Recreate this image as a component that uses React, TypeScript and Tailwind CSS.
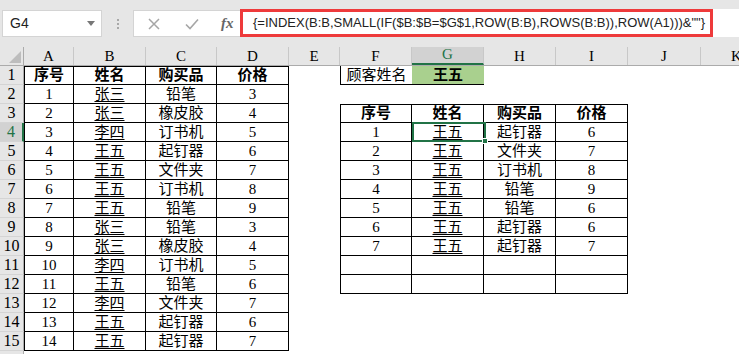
import React from 'react';

const COLS = [
    { k: 'A', w: 'w-[50px]' },
    { k: 'B', w: 'w-[72px]' },
    { k: 'C', w: 'w-[71px]' },
    { k: 'D', w: 'w-[72px]' },
    { k: 'E', w: 'w-[51px]' },
    { k: 'F', w: 'w-[72px]' },
    { k: 'G', w: 'w-[72px]' },
    { k: 'H', w: 'w-[72px]' },
    { k: 'I', w: 'w-[72px]' },
    { k: 'J', w: 'w-[73px]' },
    { k: 'K', w: 'w-[72px]' },
];

const HEAD = ['序号', '姓名', '购买品', '价格'];

const LEFT: (string | number)[][] = [
    [1, '张三', '铅笔', 3],
    [2, '张三', '橡皮胶', 4],
    [3, '李四', '订书机', 5],
    [4, '王五', '起钉器', 6],
    [5, '王五', '文件夹', 7],
    [6, '王五', '订书机', 8],
    [7, '王五', '铅笔', 9],
    [8, '张三', '铅笔', 3],
    [9, '张三', '橡皮胶', 4],
    [10, '李四', '订书机', 5],
    [11, '王五', '铅笔', 6],
    [12, '李四', '文件夹', 7],
    [13, '王五', '起钉器', 6],
    [14, '王五', '起钉器', 7],
];

const RIGHT: (string | number)[][] = [
    [1, '王五', '起钉器', 6],
    [2, '王五', '文件夹', 7],
    [3, '王五', '订书机', 8],
    [4, '王五', '铅笔', 9],
    [5, '王五', '铅笔', 6],
    [6, '王五', '起钉器', 6],
    [7, '王五', '起钉器', 7],
    ['', '', '', ''],
    ['', '', '', ''],
];

interface CellInfo {
    text: string;
    bold?: boolean;
    underline?: boolean;
    green?: boolean;
    bt?: boolean;
    bl?: boolean;
    bb?: boolean;
    br?: boolean;
}

const FORMULA = '{=INDEX(B:B,SMALL(IF($B:$B=$G$1,ROW(B:B),ROWS(B:B)),ROW(A1)))&""}';

function getCell(r: number, c: number): CellInfo {
    // left table A1:D15
    if (c <= 3 && r <= 15) {
        const text = r === 1 ? HEAD[c] : String(LEFT[r - 2][c]);
        return { text, bold: r === 1, underline: r > 1 && c === 1, bt: r === 1, bl: c === 0, bb: true, br: true };
    }
    // lookup cells F1:G1
    if (r === 1 && c === 5) return { text: '顾客姓名', bl: true, bb: true };
    if (r === 1 && c === 6) return { text: '王五', bold: true, green: true, bb: true };
    // right table F3:I12
    if (c >= 5 && c <= 8 && r >= 3 && r <= 12) {
        const i = c - 5;
        const text = r === 3 ? HEAD[i] : String(RIGHT[r - 4][i]);
        return { text, bold: r === 3, underline: r > 3 && i === 1, bt: r === 3, bl: i === 0, bb: true, br: true };
    }
    return { text: '' };
}

const Cell: React.FC<{ info: CellInfo; w: string }> = ({ info, w }) => (
    <div
        className={[
            w,
            'h-[19px] shrink-0 box-border flex items-end justify-center overflow-hidden leading-[18px] text-[15px] text-black border-black',
            info.bt ? 'border-t' : '',
            info.bl ? 'border-l' : '',
            info.bb ? 'border-b' : '',
            info.br ? 'border-r' : '',
            info.bold ? 'font-bold' : '',
            info.green ? 'bg-[#a9d08e]' : '',
        ].join(' ')}
    >
        <span className={info.underline ? 'underline underline-offset-[2px] decoration-1' : ''}>{info.text}</span>
    </div>
);

const App: React.FC = () => {
    const rows = Array.from({ length: 16 }, (_, i) => i + 1);

    return (
        <div className="w-[739px] h-[354px] overflow-hidden bg-white" style={{ fontFamily: '"Liberation Serif", "Noto Sans CJK SC", serif' }}>
            {/* Formula bar */}
            <div className="h-[47px] bg-[#e6e6e6] flex items-start pt-[10px] pl-[2px]" style={{ fontFamily: '"Liberation Sans", "Noto Sans CJK SC", sans-serif' }}>
                <div className="w-[100px] h-[27px] bg-white border border-[#d4d4d4] flex items-center justify-between pl-[7px] pr-[6px] text-[14px] text-[#222]">
                    <span>G4</span>
                    <svg width="8" height="5" viewBox="0 0 8 5"><path d="M0 0h8L4 5z" fill="#777" /></svg>
                </div>
                <div className="w-[31px] h-[27px] flex flex-col items-center justify-center gap-[2px]">
                    <span className="w-[2px] h-[2px] bg-[#a8a8a8]"></span>
                    <span className="w-[2px] h-[2px] bg-[#a8a8a8]"></span>
                    <span className="w-[2px] h-[2px] bg-[#a8a8a8]"></span>
                </div>
                <div className="w-[107px] h-[27px] bg-white border border-[#d4d4d4] border-r-0 flex items-center pl-[14px]">
                    <svg width="12" height="12" viewBox="0 0 12 12"><path d="M1 1l10 10M11 1L1 11" stroke="#a6a6a6" strokeWidth="1.5" /></svg>
                    <svg className="ml-[25px]" width="14" height="12" viewBox="0 0 14 12"><path d="M1 6.5l4 4L13 1.5" stroke="#a6a6a6" strokeWidth="1.6" fill="none" /></svg>
                    <span className="ml-[22px] text-[15px] italic font-bold text-[#666]" style={{ fontFamily: '"Liberation Serif", serif' }}>fx</span>
                </div>
                <div className="flex-1 h-[28px] -mt-[1px] bg-white flex items-stretch">
                    <div className="w-[473px] border-[3px] border-[#ee3a3b] flex items-center pl-[10px] text-[13px] text-[#222] whitespace-nowrap overflow-hidden">
                        {FORMULA}
                    </div>
                </div>
            </div>

            {/* Column headers */}
            <div className="flex h-[19px] bg-[#e6e6e6] border-b border-[#ababab] box-border">
                <div className="w-[24px] shrink-0 border-r border-[#ababab] flex items-end justify-end pr-[2px] pb-[2px]">
                    <svg width="12" height="12" viewBox="0 0 12 12"><path d="M12 0v12H0z" fill="#bdbdbd" /></svg>
                </div>
                {COLS.map(col => (
                    <div
                        key={col.k}
                        className={[
                            col.w,
                            'shrink-0 box-border border-r border-[#c8c8c8] flex items-end justify-center text-[15px] leading-[17px] overflow-hidden',
                            col.k === 'G' ? 'bg-[#d2d2d2] text-[#217346] border-b-2 border-b-[#217346]' : 'text-black',
                        ].join(' ')}
                    >
                        {col.k}
                    </div>
                ))}
            </div>

            {/* Grid */}
            <div className="relative">
                {rows.map(r => (
                    <div key={r} className="flex h-[19px]">
                        <div
                            className={[
                                'w-[24px] shrink-0 box-border border-b border-b-[#d4d4d4] flex items-end justify-center text-[16px] leading-[18px]',
                                r === 4
                                    ? 'bg-[#d2d2d2] text-[#217346] border-r-2 border-r-[#217346]'
                                    : 'bg-[#e6e6e6] text-black border-r border-r-[#ababab]',
                            ].join(' ')}
                        >
                            {r}
                        </div>
                        {COLS.map((col, c) => (
                            <Cell key={col.k} info={getCell(r, c)} w={col.w} />
                        ))}
                    </div>
                ))}

                {/* Active cell G4 */}
                <div className="absolute left-[412px] top-[56px] w-[74px] h-[20px] border-2 border-[#217346] pointer-events-none">
                    <div className="absolute -right-[4px] -bottom-[4px] w-[6px] h-[6px] bg-[#217346] border border-white"></div>
                </div>
            </div>
        </div>
    );
};

export default App;
